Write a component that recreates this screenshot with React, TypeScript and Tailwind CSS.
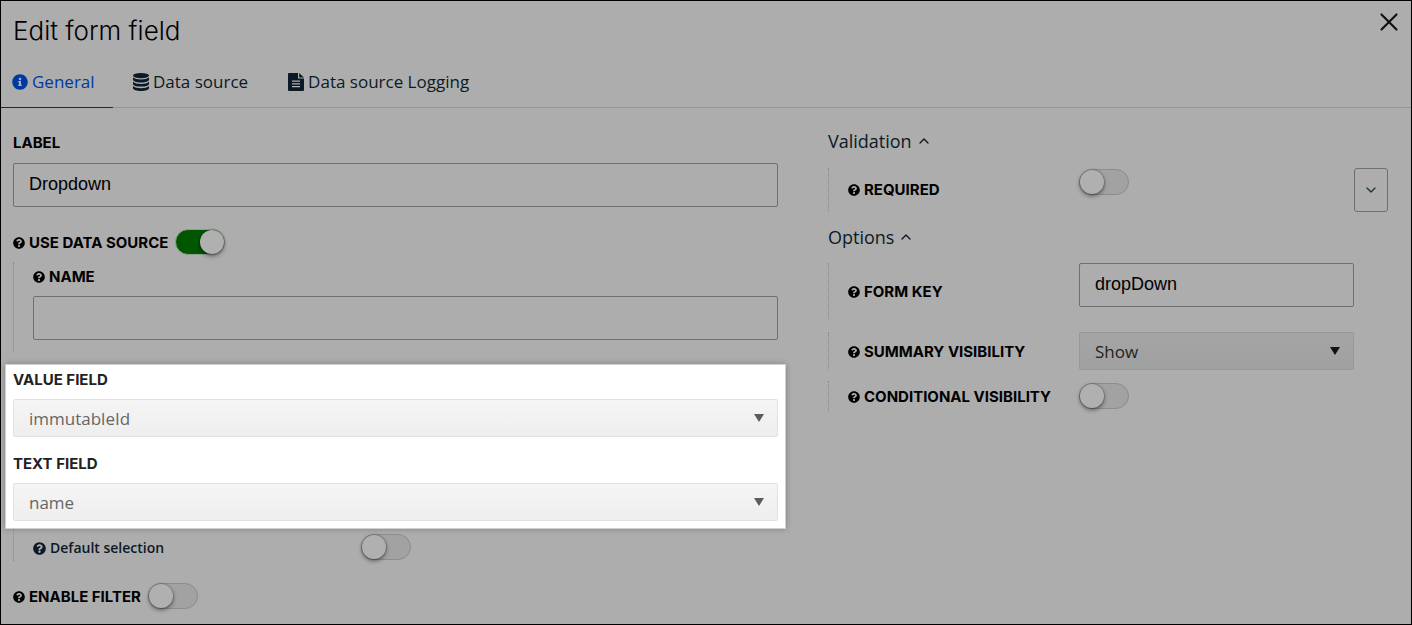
import { ChevronDown, ChevronUp, X } from 'lucide-react';
import React from 'react';
import { FaInfoCircle, FaQuestionCircle } from 'react-icons/fa';

const labelClass = "flex items-center gap-1 font-['Inter',sans-serif] text-[15px] leading-5 font-bold uppercase";
const inputClass = "block h-11 w-full rounded-xs border border-[#6f6f6f] bg-transparent px-[15px] pb-0.5 font-['Liberation_Sans',sans-serif] text-lg text-black outline-none";

interface ToggleProps {
  id: string;
  checked?: boolean;
}

const Toggle: React.FC<ToggleProps> = ({ id, checked }) => (
  <input
    id={id}
    type="checkbox"
    defaultChecked={checked}
    className="flex h-[26px] w-[50px] shrink-0 cursor-pointer appearance-none items-center rounded-full border border-[#8c8c8c] bg-[#a2a2a2] before:size-6 before:rounded-full before:bg-[#b0b0b0] before:shadow-[0_2px_4px_rgba(0,0,0,0.45),0_0_1px_1px_rgba(0,0,0,0.15)] checked:justify-end checked:border-[#8fa08f] checked:bg-[#005700]"
  />
);

interface SelectProps {
  id: string;
  options: string[];
  dimmed?: boolean;
}

const Select: React.FC<SelectProps> = ({ id, options, dimmed }) => (
  <div className="relative">
    <select
      id={id}
      className={
        dimmed
          ? 'block h-[38px] w-full appearance-none rounded-xs border border-[#989898] bg-linear-to-b from-[#a5a5a5] to-[#a0a0a0] px-[15px] pt-px text-[17px] text-[#222]'
          : 'block h-[38px] w-full appearance-none rounded-xs border border-[#e2e2e2] bg-linear-to-b from-[#f5f5f5] to-[#eee] px-[15px] pt-px text-[17px] text-[#666]'
      }
    >
      {options.map((option) => (
        <option key={option}>{option}</option>
      ))}
    </select>
    <svg
      viewBox="0 0 10 8"
      className={dimmed ? 'pointer-events-none absolute top-[15px] right-3.5 h-2 w-2.5 fill-[#111]' : 'pointer-events-none absolute top-[15px] right-3.5 h-2 w-2.5 fill-[#5c5c5c]'}
    >
      <path d="M0 0h10L5 8z" />
    </svg>
  </div>
);

const HelpIcon = () => <FaQuestionCircle className="size-3 shrink-0" />;

const DatabaseIcon = () => (
  <svg viewBox="0 0 16 18" className="mt-[3px] h-[18px] w-4 shrink-0" fill="currentColor">
    <ellipse cx="8" cy="2.600" rx="8" ry="2.600" />
    <path d="M0 4.300c1.500 1.600 4.500 2.200 8 2.200s6.500-.6 8-2.200v2.400c0 1.500-3.600 2.700-8 2.700S0 8.200 0 6.700z" />
    <path d="M0 8.700c1.500 1.600 4.500 2.200 8 2.200s6.500-.6 8-2.200v2.200c0 1.500-3.600 2.700-8 2.700s-8-1.200-8-2.700z" />
    <path d="M0 13c1.500 1.600 4.500 2.200 8 2.200s6.500-.6 8-2.200v2.300C16 16.800 12.400 18 8 18s-8-1.200-8-2.700z" />
  </svg>
);

const FileIcon = () => (
  <svg viewBox="0 0 16 18" className="mt-[3px] h-[18px] w-4 shrink-0" fill="currentColor">
    <path
      fillRule="evenodd"
      d="M1 0h9v5.500h6V17a1 1 0 0 1-1 1H1a1 1 0 0 1-1-1V1a1 1 0 0 1 1-1zM4 7.500v1.200h8V7.500zM4 10.300v1.200h8v-1.200zM4 13.100v1.200h8v-1.200z"
    />
    <path d="M11.200 0 16 4.400h-4.800z" />
  </svg>
);

export default function App() {
  return (
    <main className="min-h-screen border border-black bg-[#adadad] font-['Open_Sans',sans-serif] text-[#0b1a26]">
      {/* Header */}
      <header className="flex items-start justify-between pt-3 pr-[7px] pl-3">
        <h1 className="font-['Inter',sans-serif] text-[26px] leading-9 font-light text-black">Edit form field</h1>
        <button type="button" aria-label="Close" className="-mt-1.5 text-[#111]">
          <X className="size-[30px]" strokeWidth={1.7} />
        </button>
      </header>

      {/* Tabs */}
      <nav className="mt-2 flex h-[51px] border-b border-[#959595] text-[17px] leading-6">
        <a href="#general" className="-mb-px flex w-28 items-start gap-1 border-b border-[#002a8c] pt-[13px] pl-[11px] text-[#0039a3]">
          <FaInfoCircle className="mt-1 size-4 shrink-0" />
          General
        </a>
        <a href="#data-source" className="ml-5 flex items-start gap-1 pt-[13px]">
          <DatabaseIcon />
          Data source
        </a>
        <a href="#logging" className="ml-10 flex items-start gap-1 pt-[13px]">
          <FileIcon />
          Data source Logging
        </a>
      </nav>

      <form className="grid grid-cols-[765fr_560fr] gap-x-[50px] pr-[23px] pl-3">
        {/* Left column */}
        <div className="pt-[25px]">
          <label htmlFor="label" className={`${labelClass} text-black`}>Label</label>
          <input id="label" type="text" defaultValue="Dropdown" className={`mt-[10px] ${inputClass}`} />

          <div className="mt-[22px] flex items-center gap-[7px]">
            <label htmlFor="use-data-source" className={`${labelClass} pt-0.5 text-black`}>
              <HelpIcon />
              Use data source
            </label>
            <Toggle id="use-data-source" checked />
          </div>

          <div className="mt-[7px] h-[90px] border-l border-dotted border-[#888] pt-[5px] pl-[19px]">
            <label htmlFor="name" className={`${labelClass} text-black`}>
              <HelpIcon />
              Name
            </label>
            <input id="name" type="text" className={`mt-[9px] ${inputClass}`} />
          </div>

          {/* Highlighted fields */}
          <section className="-mx-2 mt-3 border border-[#d0d0d0] bg-white px-[7px] pt-[5px] pb-[7px] shadow-[0_0_6px_rgba(0,0,0,0.25)]">
            <label htmlFor="value-field" className={`${labelClass} text-[#222]`}>Value field</label>
            <div className="mt-[9px]">
              <Select id="value-field" options={['immutableId', 'name']} />
            </div>
            <label htmlFor="text-field" className={`mt-[17px] ${labelClass} text-[#222]`}>Text field</label>
            <div className="mt-[9px]">
              <Select id="text-field" options={['name', 'immutableId']} />
            </div>
          </section>

          <div className="flex h-8 items-center border-l border-dotted border-[#888] pt-1 pl-[19px]">
            <label htmlFor="default-selection" className="flex w-[328px] items-center gap-1 pt-0.5 text-sm font-semibold">
              <FaQuestionCircle className="size-[13px] shrink-0" />
              Default selection
            </label>
            <Toggle id="default-selection" />
          </div>

          <div className="mt-[22px] flex items-center gap-[7px]">
            <label htmlFor="enable-filter" className={`${labelClass} pt-0.5 text-black`}>
              <HelpIcon />
              Enable filter
            </label>
            <Toggle id="enable-filter" />
          </div>
        </div>

        {/* Right column */}
        <div className="pt-[21px]">
          <button type="button" className="flex h-6 items-center gap-1 text-lg">
            Validation
            <ChevronUp className="size-4" strokeWidth={2} />
          </button>
          <div className="mt-[15px] grid h-11 grid-cols-[250px_1fr_34px] border-l border-dotted border-[#888]">
            <label htmlFor="required" className={`pl-[19px] ${labelClass} text-black`}>
              <HelpIcon />
              Required
            </label>
            <div className="pt-px">
              <Toggle id="required" />
            </div>
            <button type="button" aria-label="More validation" className="flex h-11 items-center justify-center rounded-[3px] border border-[#6f6f6f] text-[#22333d]">
              <ChevronDown className="size-4" strokeWidth={2} />
            </button>
          </div>

          <button type="button" className="mt-[13px] flex h-6 items-center gap-1 text-lg">
            Options
            <ChevronUp className="size-4" strokeWidth={2} />
          </button>
          <div className="mt-[14px] grid h-14 grid-cols-[250px_1fr_34px] border-l border-dotted border-[#888]">
            <label htmlFor="form-key" className={`pt-0.5 pl-[19px] ${labelClass} text-black`}>
              <HelpIcon />
              Form key
            </label>
            <input id="form-key" type="text" defaultValue="dropDown" className={inputClass} />
          </div>
          <div className="mt-[13px] grid h-[38px] grid-cols-[250px_1fr_34px] border-l border-dotted border-[#888]">
            <label htmlFor="summary" className={`pt-0.5 pl-[19px] ${labelClass} text-black`}>
              <HelpIcon />
              Summary visibility
            </label>
            <Select id="summary" options={['Show', 'Hide']} dimmed />
          </div>
          <div className="mt-[11px] grid h-[30px] grid-cols-[250px_1fr_34px] items-center border-l border-dotted border-[#888]">
            <label htmlFor="conditional" className={`pt-0.5 pl-[19px] ${labelClass} text-black`}>
              <HelpIcon />
              Conditional visibility
            </label>
            <Toggle id="conditional" />
          </div>
        </div>
      </form>
    </main>
  );
}
